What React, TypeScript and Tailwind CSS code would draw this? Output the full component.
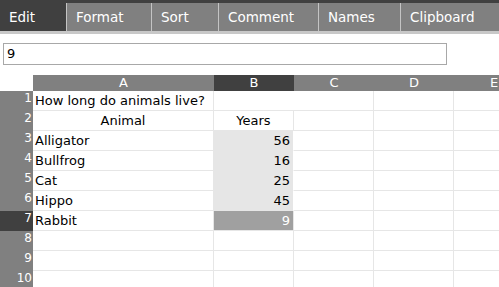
import React from "react"

const tabs = [
  { label: "Edit", w: "w-[66px]", active: true },
  { label: "Format", w: "w-[85px]" },
  { label: "Sort", w: "w-[67px]" },
  { label: "Comment", w: "w-[100px]" },
  { label: "Names", w: "w-[82px]" },
  { label: "Clipboard", w: "flex-1" },
]

const cols = ["A", "B", "C", "D", "E"]

type Row = { n: number; a?: string; b?: string; kind?: "title" | "head" | "num" | "sel" }

const rows: Row[] = [
  { n: 1, a: "How long do animals live?", kind: "title" },
  { n: 2, a: "Animal", b: "Years", kind: "head" },
  { n: 3, a: "Alligator", b: "56", kind: "num" },
  { n: 4, a: "Bullfrog", b: "16", kind: "num" },
  { n: 5, a: "Cat", b: "25", kind: "num" },
  { n: 6, a: "Hippo", b: "45", kind: "num" },
  { n: 7, a: "Rabbit", b: "9", kind: "sel" },
  { n: 8 },
  { n: 9 },
  { n: 10 },
]

export default function App() {
  return (
    <div className="w-[499px] h-[287px] overflow-hidden bg-white text-black font-['DejaVu_Sans',Verdana,sans-serif]">
      {/* ribbon tabs */}
      <div className="bg-[#404040] pt-[3px]">
        <div className="flex h-[28px] text-[13.5px] text-white">
          {tabs.map((t) => (
            <div
              key={t.label}
              className={`${t.w} flex items-center pl-[9px] ${
                t.active ? "bg-[#404040]" : "bg-[#808080] border-l border-[#c4c4c4]"
              }`}
            >
              {t.label}
            </div>
          ))}
        </div>
      </div>
      <div className="h-[3px] bg-[#c8c8c8]" />

      {/* formula box */}
      <div className="pt-[9px] pl-[3px]">
        <div className="w-[444px] h-[22px] border border-[#a8a8a8] flex items-center pl-[3px] text-[13px]">
          9
        </div>
      </div>

      {/* sheet */}
      <div className="mt-[10px] grid grid-cols-[33px_181px_80px_80px_80px_80px] text-[13px]">
        <div className="h-[16px]" />
        {cols.map((c) => (
          <div
            key={c}
            className={`h-[16px] flex items-center justify-center text-white ${
              c === "B" ? "bg-[#404040]" : "bg-[#808080]"
            }`}
          >
            {c}
          </div>
        ))}

        {rows.map((r) => (
          <React.Fragment key={r.n}>
            <div
              className={`h-[20px] text-right pr-[1px] text-[12px] leading-[15px] text-white ${
                r.kind === "sel" ? "bg-[#404040]" : "bg-[#808080]"
              }`}
            >
              {r.n}
            </div>
            {r.kind === "title" ? (
              <div className="col-span-2 h-[20px] border-b border-[#e6e6e6] pl-[2px] leading-[19px] whitespace-nowrap relative">
                {r.a}
                <div className="absolute top-0 bottom-0 left-[180px] w-px bg-[#e6e6e6]" />
              </div>
            ) : (
              <>
                <div
                  className={`h-[20px] border-b border-r border-[#e6e6e6] leading-[19px] px-[2px] ${
                    r.kind === "head" ? "text-center" : "text-left"
                  }`}
                >
                  {r.a}
                </div>
                <div
                  className={`h-[20px] border-b border-r border-[#e6e6e6] leading-[19px] px-[3px] ${
                    r.kind === "head"
                      ? "text-center"
                      : r.kind === "num"
                      ? "text-right bg-[#e6e6e6] border-r-white"
                      : r.kind === "sel"
                      ? "text-right bg-[#a0a0a0] text-white"
                      : ""
                  }`}
                >
                  {r.b}
                </div>
              </>
            )}
            <div className="h-[20px] border-b border-r border-[#e6e6e6]" />
            <div className="h-[20px] border-b border-r border-[#e6e6e6]" />
            <div className="h-[20px] border-b border-r border-[#e6e6e6]" />
          </React.Fragment>
        ))}
      </div>
    </div>
  )
}
